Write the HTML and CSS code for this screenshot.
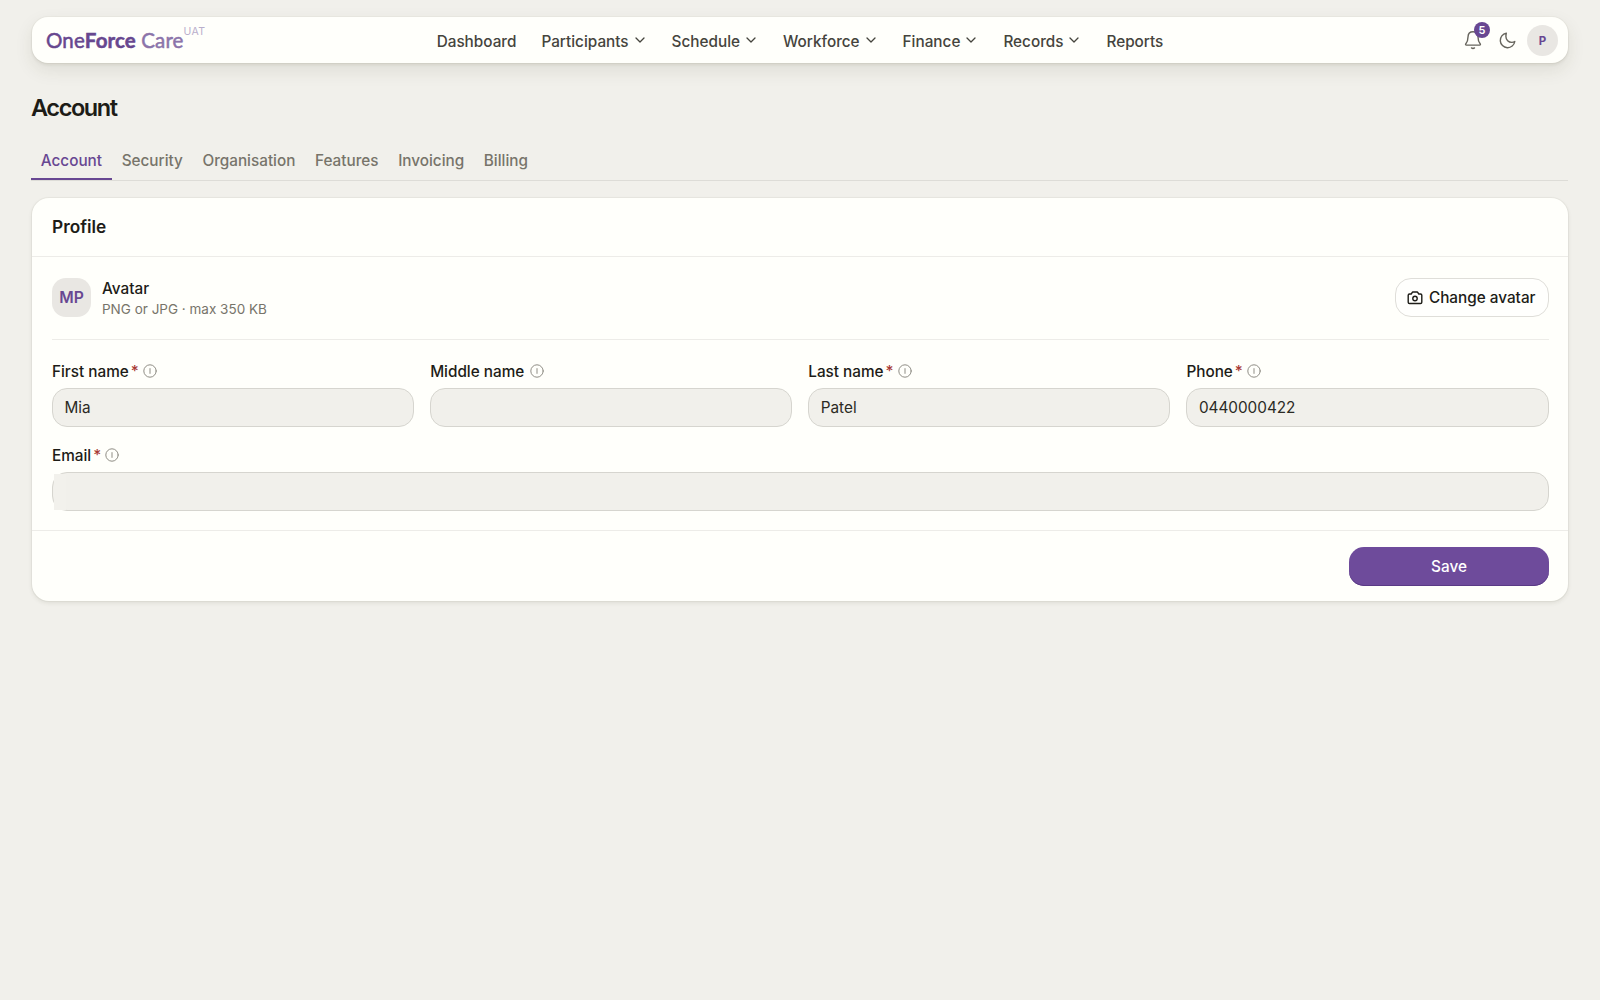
FILE: index.html
```html
<!DOCTYPE html>
<html lang="en">
<head>
    <meta charset="UTF-8">
    <meta name="viewport" content="width=device-width, initial-scale=1.0">
    <title>Account - OneForce Care</title>
    <link rel="stylesheet" href="styles.css">
</head>
<body>
    <!-- shared icons -->
    <svg class="sprite" width="0" height="0">
        <symbol id="chevron" viewBox="0 0 10 6"><path d="M1 1l4 4 4-4"/></symbol>
        <symbol id="info" viewBox="0 0 14 14"><circle cx="7" cy="7" r="6.2"/><path d="M7 4.6v4.8"/></symbol>
    </svg>

    <header class="header">
        <a class="logo" href="#"><span class="logo-text">One<b>Force</b> <i>Care</i></span><sup>UAT</sup></a>
        <nav class="nav">
            <a href="#">Dashboard</a>
            <a href="#">Participants<svg class="chevron"><use href="#chevron"/></svg></a>
            <a href="#">Schedule<svg class="chevron"><use href="#chevron"/></svg></a>
            <a href="#">Workforce<svg class="chevron"><use href="#chevron"/></svg></a>
            <a href="#">Finance<svg class="chevron"><use href="#chevron"/></svg></a>
            <a href="#">Records<svg class="chevron"><use href="#chevron"/></svg></a>
            <a href="#">Reports</a>
        </nav>
        <div class="tools">
            <a class="tool bell" href="#">
                <svg viewBox="0 0 18 20"><path d="M9 1.8c-3.1 0-4.9 2.2-5 5.1-.1 3.3-.5 4.9-2 6.5-.8.9-.5 1.7.5 1.7h13c1 0 1.3-.8.5-1.7-1.5-1.6-1.9-3.2-2-6.500-.1-2.900-1.900-5.100-5-5.100z"/><path d="M7.500 17.900c.9.700 2.100.7 3 0"/></svg>
                <span class="badge">5</span>
            </a>
            <a class="tool moon" href="#">
                <svg viewBox="0 0 17 17"><path d="M7.300 1.200a7.300 7.300 0 1 0 8.500 8.300c-.9.600-1.900.9-3 .9-3.200 0-5.900-2.500-5.900-5.800 0-1.200.1-2.400.4-3.400z"/></svg>
            </a>
            <a class="user" href="#">P</a>
        </div>
    </header>

    <main class="main">
        <h1>Account</h1>
        <nav class="tabs">
            <a class="on" href="#">Account</a>
            <a href="#">Security</a>
            <a href="#">Organisation</a>
            <a href="#">Features</a>
            <a href="#">Invoicing</a>
            <a href="#">Billing</a>
        </nav>

        <form class="card">
            <h2>Profile</h2>
            <div class="card-body">
                <div class="avatar-row">
                    <div class="avatar">MP</div>
                    <div class="avatar-info">
                        <strong>Avatar</strong>
                        <p>PNG or JPG · max 350 KB</p>
                    </div>
                    <button class="btn-change" type="button">
                        <svg viewBox="0 0 16 14"><path d="M5 1.8l.7-.8h4.600l.7.800.8 1.200h1.700c.8 0 1.300.5 1.300 1.300v6.900c0 .8-.5 1.300-1.300 1.300h-11C1.700 12.500 1.200 12 1.200 11.200V4.300C1.200 3.500 1.700 3 2.500 3h1.700z"/><circle cx="8" cy="7.500" r="2.200"/></svg>
                        Change avatar
                    </button>
                </div>
                <div class="fields">
                    <div class="field">
                        <label for="first">First name<em>*</em><svg class="info"><use href="#info"/></svg></label>
                        <input id="first" type="text" value="Mia">
                    </div>
                    <div class="field">
                        <label for="middle">Middle name<svg class="info"><use href="#info"/></svg></label>
                        <input id="middle" type="text">
                    </div>
                    <div class="field">
                        <label for="last">Last name<em>*</em><svg class="info"><use href="#info"/></svg></label>
                        <input id="last" type="text" value="Patel">
                    </div>
                    <div class="field">
                        <label for="phone">Phone<em>*</em><svg class="info"><use href="#info"/></svg></label>
                        <input id="phone" type="text" value="0440000422">
                    </div>
                    <div class="field wide">
                        <label for="email">Email<em>*</em><svg class="info"><use href="#info"/></svg></label>
                        <div class="email-box"><input id="email" type="text"></div>
                    </div>
                </div>
            </div>
            <div class="card-foot">
                <button class="btn-save" type="button">Save</button>
            </div>
        </form>
    </main>
</body>
</html>
```
FILE: styles.css
```css
*{margin:0; padding:0; box-sizing: border-box;}
a{text-decoration: none; color: inherit;}
body{
    min-height: 100vh;
    padding: 17px 32px 0;
    background-color: #f1f0eb;
    color: #1d1c17;
    font-family: Inter, "Liberation Sans", sans-serif;
    font-size: 15.3px;
    line-height: 20px;
}
svg{fill: none; stroke: currentColor; stroke-linecap: round; stroke-linejoin: round;}
.sprite{position: absolute;}

/* header */
.header{
    display: grid;
    grid-template-columns: 1fr auto 1fr;
    align-items: center;
    height: 46px;
    padding: 0 10px 0 14px;
    border-radius: 16px;
    background-color: #fffffb;
    box-shadow: 0 0 0 1px rgba(60,55,30,.03), 0 2px 3px rgba(60,55,30,.08), 0 7px 18px rgba(60,55,30,.1);
}
.logo{display: flex; color: #67478f;}
.logo-text{
    font-family: Lato, sans-serif;
    font-size: 20.5px;
    line-height: 24px;
    letter-spacing: .12px;
    -webkit-text-stroke: .5px;
}
.logo i{font-style: normal; color: #8b74aa;}
.logo sup{font-size: 10.5px; line-height: 10px; letter-spacing: .4px; color: #b9aecb; margin-top: -1px;}
.nav{display: flex; gap: 25px; padding-top: 3px; margin: 0 2px 0 -2px; color: #45443d; font-weight: 500;}
.nav a{display: flex; align-items: center;}
.chevron{width: 10px; height: 6px; margin: -4px 2px 0 6px; stroke-width: 1.3;}
.tools{display: flex; justify-content: flex-end; align-items: center; color: #66645c;}
.tool{position: relative; display: block;}
.tool svg{display: block; stroke-width: 1.4;}
.bell svg{width: 18px; height: 20px;}
.badge{
    position: absolute; left: 10px; top: -8px;
    width: 16px; height: 16px;
    border-radius: 50%;
    background-color: #684792;
    color: #fff;
    font-size: 11px; font-weight: 600; line-height: 17px;
    text-align: center;
}
.moon{margin: 0 11px 0 17px;}
.moon svg{width: 17px; height: 17px;}
.user{
    width: 31px; height: 31px;
    border-radius: 50%;
    background-color: #e9e7e3;
    color: #684792;
    font-size: 11.5px; font-weight: 700; line-height: 32px;
    text-align: center;
}

/* title, tabs */
h1{
    margin: 30px 0 18px -1px;
    font-size: 23.5px; font-weight: 600; line-height: 30px;
    letter-spacing: -1.4px;
}
.tabs{
    display: flex;
    margin: 0 0 17px -1px;
    border-bottom: 1px solid #dddcd7;
    color: #77746a;
    font-weight: 500;
}
.tabs a{padding: 10px 9.8px 9px;}
.tabs .on{padding-bottom: 7px; color: #684792; border-bottom: 2px solid #684792;}

/* card */
.card{
    border-radius: 17px;
    background-color: #fffffb;
    box-shadow: 0 0 0 1px rgba(60,55,30,.04), 0 2px 4px rgba(60,55,30,.1);
}
h2{
    padding: 19px 20px;
    border-bottom: 1px solid #edece8;
    font-size: 17.3px; font-weight: 600; line-height: 20px;
}
.card-body{padding: 21px 19.5px 19px 20px;}
.avatar-row{
    display: flex;
    align-items: center;
    padding-bottom: 22px;
    border-bottom: 1px solid #edece8;
}
.avatar{
    width: 39px; height: 39px;
    border-radius: 14px;
    background-color: #e9e7e3;
    color: #684792;
    font-size: 15.7px; font-weight: 600; line-height: 40px;
    text-align: center;
}
.avatar-info{flex: 1; margin: 1px 0 -3px 11px;}
.avatar-info strong{display: block; font-weight: 500;}
.avatar-info p{color: #77746a; font-size: 13.5px; line-height: 21px;}
button{font: 500 15.3px/20px Inter, "Liberation Sans", sans-serif; border: 0;}
.btn-change{
    display: flex; align-items: center; gap: 6px;
    height: 39px;
    padding: 1px 12px 0 11px;
    border: 1px solid #dfded9;
    border-radius: 16px;
    background-color: #fffffd;
    color: #1d1c17;
}
.btn-change svg{width: 16px; height: 14px; stroke-width: 1.4;}

.fields{
    display: grid;
    grid-template-columns: repeat(4, 1fr);
    gap: 18px 16px;
    padding-top: 21px;
}
.wide{grid-column: 1 / -1;}
.field label{
    display: flex; align-items: center;
    padding-top: 1px;
    margin-bottom: 6px;
    font-weight: 500;
}
.field em{margin-left: 2px; font-style: normal; color: #a83a35;}
.info{width: 14px; height: 14px; margin: -3px 0 0 6px; color: #8f8d85;}
em + .info{margin-left: 4px;}
.field input{
    display: block;
    width: 100%; height: 39px;
    padding: 0 11.5px;
    border: 1px solid #d6d5cf;
    border-radius: 15px;
    background-color: #f1f0eb;
    color: #2b2a24;
    font: 400 15.3px Inter, "Liberation Sans", sans-serif;
}
.email-box{position: relative;}
.email-box::before{
    content: '';
    position: absolute; left: 2px; top: 2px;
    width: 12px; height: 36px;
    background-color: #f2f1ec;
}
.card-foot{
    display: flex; justify-content: flex-end;
    padding: 16px 19px 15px 20px;
    border-top: 1px solid #edece8;
}
.btn-save{
    width: 200px; height: 39px;
    padding-top: 1px;
    border-radius: 15px;
    background-color: #6e4b9b;
    box-shadow: inset 0 -1px 0 #5a3a85;
    color: #fff;
}
```
